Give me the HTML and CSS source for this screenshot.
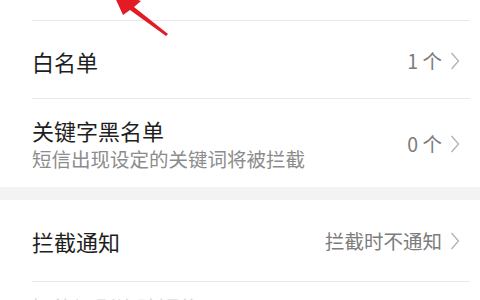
FILE: index.html
```html
<!DOCTYPE html>
<html lang="zh-CN">
<head>
<meta charset="utf-8">
<title>拦截设置</title>
<link rel="stylesheet" href="styles.css">
</head>
<body>
<div class="screen">
  <div class="row row-top"></div>

  <div class="row row-white">
    <div class="main"><div class="title">白名单</div></div>
    <div class="value">1 个</div>
    <svg class="chev" viewBox="0 0 10 18" width="10" height="18"><polyline points="1.5,1 8.5,9 1.5,17" /></svg>
  </div>

  <div class="row row-keyword">
    <div class="main">
      <div class="title">关键字黑名单</div>
      <div class="sub">短信出现设定的关键词将被拦截</div>
    </div>
    <div class="value">0 个</div>
    <svg class="chev" viewBox="0 0 10 18" width="10" height="18"><polyline points="1.5,1 8.5,9 1.5,17" /></svg>
  </div>

  <div class="gap"></div>

  <div class="row row-notify">
    <div class="main"><div class="title">拦截通知</div></div>
    <div class="value">拦截时不通知</div>
    <svg class="chev" viewBox="0 0 10 18" width="10" height="18"><polyline points="1.5,1 8.5,9 1.5,17" /></svg>
  </div>

  <div class="row row-next">
    <div class="main"><div class="title faint">智能识别诈骗短信</div></div>
  </div>

  <svg class="arrow" viewBox="0 0 480 300" width="480" height="300">
    <polygon points="112,-9 141,1 134,7 168,34 166,36 130,10 123,15" />
  </svg>
</div>
</body>
</html>
```

FILE: styles.css
```css
html, body {
  margin: 0;
  padding: 0;
  background: #ffffff;
}

.screen {
  position: relative;
  width: 480px;
  height: 300px;
  overflow: hidden;
  background: #ffffff;
  font-family: "Noto Sans CJK SC", "Noto Sans", sans-serif;
}

.row {
  display: flex;
  align-items: center;
  margin-left: 32px;
  margin-right: 10px;
  padding-right: 10px;
  border-bottom: 1px solid #e8e8e8;
  box-sizing: border-box;
}

.row-top {
  height: 21px;
}

.row-white {
  height: 78px;
  padding-top: 3px;
}

.row-keyword {
  height: 88px;
  border-bottom: none;
  padding-top: 2px;
}

.gap {
  height: 13px;
  background: #f3f3f3;
}

.row-notify {
  height: 82px;
  padding-top: 1px;
}

.row-next {
  height: 40px;
  align-items: flex-start;
  padding-top: 12px;
  border-bottom: none;
}

.main {
  flex: 1;
  display: flex;
  flex-direction: column;
  gap: 4px;
}

.title {
  font-size: 22px;
  line-height: 26px;
  color: #1e1e1e;
}

.title.faint {
  color: #d6d6d6;
  font-size: 21px;
}

.sub {
  font-size: 19.5px;
  line-height: 24px;
  color: #8c8c8c;
}

.value {
  font-size: 19.5px;
  line-height: 24px;
  color: #7c7c7c;
  margin-right: 8px;
}

.chev {
  display: block;
  flex: none;
}

.chev polyline {
  fill: none;
  stroke: #b4b4b4;
  stroke-width: 1.4;
}

.arrow {
  position: absolute;
  left: 0;
  top: 0;
  pointer-events: none;
}

.arrow polygon {
  fill: #e31b25;
}
```
